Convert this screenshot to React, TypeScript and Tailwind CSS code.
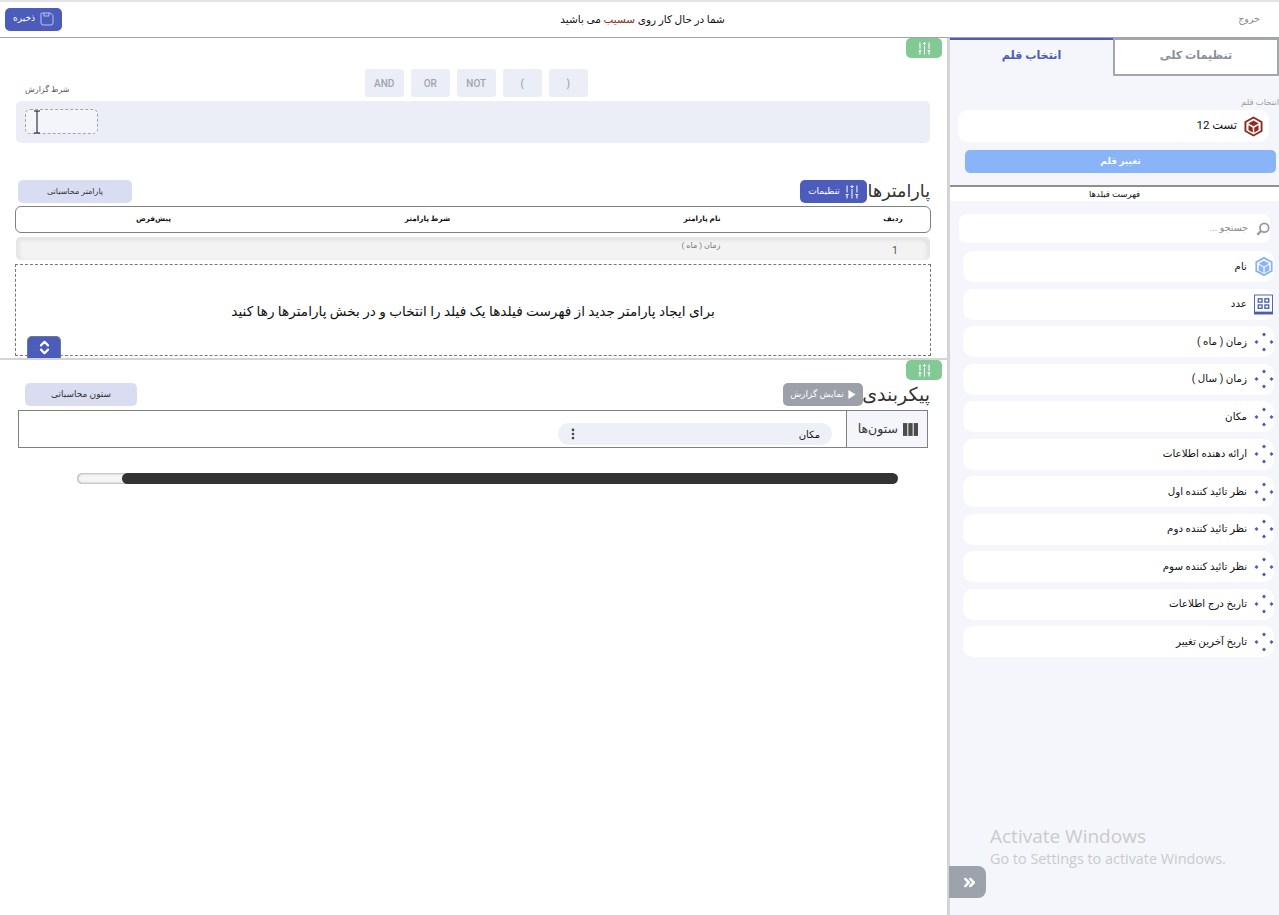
import { ChevronsRight, ChevronsUpDown, EllipsisVertical } from "lucide-react";
import { ReactNode } from "react";

const fields = [
  { name: "نام", icon: "cube" },
  { name: "عدد", icon: "grid" },
  { name: "زمان ( ماه )", icon: "dots" },
  { name: "زمان ( سال )", icon: "dots" },
  { name: "مکان", icon: "dots" },
  { name: "ارائه دهنده اطلاعات", icon: "dots" },
  { name: "نظر تائید کننده اول", icon: "dots" },
  { name: "نظر تائید کننده دوم", icon: "dots" },
  { name: "نظر تائید کننده سوم", icon: "dots" },
  { name: "تاریخ درج اطلاعات", icon: "dots" },
  { name: "تاریخ آخرین تغییر", icon: "dots" },
];

const operators = ["AND", "OR", "NOT", "(", ")"];

function SlidersIcon({ className }: { className: string }) {
  return (
    <svg viewBox="0 0 14 14" className={className} fill="currentColor">
      <rect x="1.5" y="0.5" width="1.2" height="7" />
      <rect x="6.4" y="4" width="1.2" height="9.5" />
      <rect x="11.3" y="0.5" width="1.2" height="7" />
      <path d="M0.2 9h3.8l-1.9 2.6z M5 1h4L7 3.4z M9.9 9h3.8l-1.9 2.6z" />
      <rect x="1.5" y="11" width="1.2" height="2.5" />
      <rect x="11.3" y="11" width="1.2" height="2.5" />
      <rect x="6.4" y="0.2" width="1.2" height="1" />
    </svg>
  );
}

function FieldIcon({ type }: { type: string }) {
  if (type === "cube") {
    return (
      <svg viewBox="0 0 22 22" className="w-[20px] h-[21px]" fill="none" stroke="#8ab4f8">
        <path d="M11 1.5 19.5 6.2V15.8L11 20.5 2.5 15.8V6.2Z" strokeWidth="2" />
        <path d="M11 5 16 7.8 11 10.6 6 7.8Z" fill="#8ab4f8" strokeWidth="1" />
        <path d="M5.5 9.5 10 12V17.5L5.5 15Z M16.5 9.5 12 12V17.5L16.5 15Z" fill="#8ab4f8" strokeWidth="0.6" />
      </svg>
    );
  }
  if (type === "grid") {
    return (
      <svg viewBox="0 0 20 21" className="w-[19px] h-[21px]" fill="none" stroke="#4c5cba">
        <rect x="0.5" y="0.5" width="19" height="19.5" strokeWidth="1" />
        <rect x="0" y="18" width="20" height="3" fill="#4c5cba" stroke="none" />
        <rect x="4.5" y="4.5" width="4" height="3.5" strokeWidth="1.4" />
        <rect x="11.5" y="4.5" width="4" height="3.5" strokeWidth="1.4" />
        <rect x="4.5" y="11" width="4" height="3.5" strokeWidth="1.4" />
        <rect x="11.5" y="11" width="4" height="3.5" strokeWidth="1.4" />
      </svg>
    );
  }
  return (
    <svg viewBox="0 0 20 20" className="w-[20px] h-[20px]" fill="#4c5cba">
      <path d="M10 .5 12 2.5 10 4.5 8 2.5Z M10 15.5 12 17.5 10 19.5 8 17.5Z M2.5 8 4.5 10 2.5 12 .5 10Z M17.5 8 19.5 10 17.5 12 15.5 10Z" />
    </svg>
  );
}

function SmallButton({ children, className }: { children: ReactNode; className: string }) {
  return (
    <div className={`h-[23px] rounded-[5px] flex items-center justify-center ${className}`}>
      {children}
    </div>
  );
}

function GreenTab() {
  return (
    <div className="absolute right-[5px] top-0 w-[36px] h-[20px] bg-[#82c995] rounded-[5px] flex items-center justify-center text-white">
      <SlidersIcon className="w-[13px] h-[13px]" />
    </div>
  );
}

export default function App() {
  return (
    <div dir="rtl" className="relative w-[1279px] h-[915px] overflow-hidden bg-white text-[#111] font-[Roboto,'DejaVu_Sans',sans-serif]">
      <div className="h-[2px] bg-[#e3e3e3]" />

      <header className="h-[36px] flex items-center justify-between border-b border-b-[#a3a3a8] pr-[19px] pl-[5px]">
        <span className="text-[9.5px] text-[#8a8a8a]">خروج</span>
        <span className="text-[10.5px] mr-[15px]">
          شما در حال کار روی <span className="text-[#8c2b20]">سسیب</span> می باشید
        </span>
        <div className="w-[57px] h-[23px] mt-[-1px] bg-[#4c5cba] rounded-[5px] flex items-center justify-center gap-[5px] text-white text-[9px]">
          <svg viewBox="0 0 14 14" className="w-[14px] h-[14px]" fill="none" stroke="#b9c6f2" strokeWidth="1">
            <path d="M1.5 1h9L13 3.5V11a2 2 0 0 1-2 2H3a2 2 0 0 1-2-2V1.5Z" />
            <path d="M4 1v3h5V1" />
          </svg>
          ذخیره
        </div>
      </header>

      <div className="flex h-[877px]">
        {/* sidebar */}
        <aside className="w-[329px] shrink-0 bg-[#f5f6fb]">
          <div className="flex h-[38px]">
            <div className="w-[166px] bg-white border-2 border-[#a3a6ad] pb-[2px] flex items-center justify-center text-[11.2px] font-bold text-[#8a8f9c]">
              تنظیمات کلی
            </div>
            <div className="w-[163px] border-t-2 border-t-[#4c5cba] pb-[3px] flex items-center justify-center text-[11.2px] font-bold text-[#4c5cba]">
              انتخاب قلم
            </div>
          </div>

          <div className="text-[8.5px] text-[#9a9ca6] mt-[20px] h-[12px] leading-[12px] whitespace-nowrap">انتخاب قلم</div>
          <div className="mr-[10px] ml-[8px] mt-[2px] h-[32px] bg-white rounded-[10px] flex items-center gap-[7px] px-[6px] text-[11.5px]">
            <svg viewBox="0 0 20 22" className="w-[19px] h-[21px]" fill="none" stroke="#8c2b20">
              <path d="M10 1.5 18.5 6.2V15.8L10 20.5 1.5 15.8V6.2Z" strokeWidth="2" />
              <path d="M10 5 15 7.8 10 10.6 5 7.8Z" fill="#8c2b20" strokeWidth="0.5" />
              <path d="M5 10 9 12.3V17L5 14.7Z M15 10 11 12.3V17L15 14.7Z" fill="#8c2b20" strokeWidth="0.5" />
            </svg>
            <span>تست 12</span>
          </div>
          <div className="mr-[3px] ml-[15px] mt-[8px] h-[23px] bg-[#8ab4f8] rounded-[5px] flex items-center justify-center text-white text-[9px] font-bold">
            تغییر قلم
          </div>

          <div className="mt-[12px] h-[2px] bg-[#8f8f8f]" />
          <div className="h-[14px] bg-white flex items-center justify-center text-[8.5px]">فهرست فیلدها</div>

          <div className="mr-[9px] ml-[9px] mt-[13px] h-[29px] bg-white rounded-[8px] flex items-center gap-[8px] text-[9.5px] text-[#8a8a8a]">
            <svg viewBox="0 0 16 16" className="w-[14px] h-[14px]" fill="none" stroke="#9a9a9a" strokeWidth="2">
              <circle cx="9.5" cy="6.5" r="5" />
              <path d="M5.8 10.2 1.5 14.5" strokeWidth="2.6" />
            </svg>
            <span>جستجو ...</span>
          </div>

          <div className="mt-[8px] mr-[5px] ml-[13px] flex flex-col gap-[6.5px]">
            {fields.map((field) => (
              <div key={field.name} className="h-[31px] bg-white rounded-[10px] flex items-center gap-[6px] text-[10.3px]">
                <div className="w-[21px] flex justify-center"><FieldIcon type={field.icon} /></div>
                <span>{field.name}</span>
              </div>
            ))}
          </div>
        </aside>

        <div className="w-[3px] shrink-0 bg-[#d4d4d4]" />

        {/* main */}
        <main className="flex-1 min-w-0">
          <section className="relative h-[320px]">
            <GreenTab />
            <div dir="ltr" className="pt-[31px] pl-[365px] flex gap-[7.5px]">
              {operators.map((op) => (
                <div key={op} className="w-[38.5px] h-[28px] bg-[#ebeef7] rounded-[3px] flex items-center justify-center text-[10px] font-medium text-[#a0a4ae]">
                  {op}
                </div>
              ))}
            </div>

            <div className="text-[8px] text-[#555] h-[0px] leading-[0] pl-[25px] mt-[-7px]" dir="ltr">
              <span dir="rtl">شرط گزارش</span>
            </div>

            <div dir="ltr" className="mt-[11px] ml-[16px] mr-[17px] h-[42px] bg-[#ebeef7] rounded-[5px] pl-[9px] pt-[8px]">
              <div className="relative w-[73px] h-[25px] bg-[#f3f5fb] border border-dashed border-[#a3a3a8] rounded-[5px]">
                <svg viewBox="0 0 8 24" className="absolute left-[7px] top-0 w-[8px] h-[24px]" fill="none" stroke="#111" strokeWidth="1">
                  <path d="M1 1h6M4 1v22M1 23h6" />
                </svg>
              </div>
            </div>

            <div className="mt-[37px] mr-[17px] ml-[18px] flex items-center h-[23px]">
              <span className="w-[63px] text-[17.5px] leading-[23px] text-[#333] whitespace-nowrap">پارامترها</span>
              <SmallButton className="w-[67px] bg-[#4c5cba] text-white text-[9px] gap-[5px] font-medium">
                <SlidersIcon className="w-[14px] h-[14px] text-[#dfe4f8]" />
                تنظیمات
              </SmallButton>
              <SmallButton className="w-[114px] mr-auto bg-[#d9ddf1] text-[#333] text-[8px]">پارامتر محاسباتی</SmallButton>
            </div>

            <div className="mt-[3px] mr-[16px] ml-[15px] h-[27px] border border-[#808080] rounded-[6px] flex items-center text-[7.3px] font-bold">
              <div className="w-[74px] text-center">ردیف</div>
              <div className="w-[308px] text-center">نام پارامتر</div>
              <div className="w-[241px] text-center">شرط پارامتر</div>
              <div className="w-[291px] pr-[16px] text-center">پیش‌فرض</div>
            </div>

            <div className="mt-[4px] mr-[17px] ml-[16px] h-[23px] bg-[#f3f3f3] rounded-[5px] shadow-[inset_-4px_4px_3px_#e6e6e6,inset_4px_0_3px_#e6e6e6] flex text-[#777]">
              <div className="w-[70px] text-center text-[10.5px] pt-[6px] text-[#555]">1</div>
              <div className="w-[318px] text-center text-[8px] pt-[3px]">زمان ( ماه )</div>
            </div>

            <div className="relative mt-[4px] mr-[16px] ml-[15px] h-[92px] pt-[3px] border border-dashed border-[#777] flex items-center justify-center text-[13.65px]">
              برای ایجاد پارامتر جدید از فهرست فیلدها یک فیلد را انتخاب و در بخش پارامترها رها کنید
              <div className="absolute left-[11px] top-[71px] w-[34px] h-[22px] bg-[#4c5cba] border border-[#6f7686] border-b-0 rounded-t-[5px] flex items-center justify-center text-white">
                <ChevronsUpDown size={17} strokeWidth={3} />
              </div>
            </div>
          </section>

          <div className="h-[2px] bg-[#d4d4d4]" />

          <section className="relative">
            <GreenTab />
            <div className="pt-[23px] mr-[17px] ml-[25px] flex items-center h-[46px]">
              <span className="w-[67px] text-[19px] leading-[23px] text-[#333] whitespace-nowrap">پیکربندی</span>
              <SmallButton className="w-[80px] bg-[#9ca0a8] text-white text-[9px] gap-[4px]">
                <svg viewBox="0 0 8 10" className="w-[8px] h-[9px]" fill="currentColor"><path d="M0 0 8 5 0 10Z" /></svg>
                نمایش گزارش
              </SmallButton>
              <SmallButton className="w-[112px] mr-auto bg-[#d9ddf1] text-[#333] text-[9px]">ستون محاسباتی</SmallButton>
            </div>

            <div className="mt-[4px] mr-[19px] ml-[18px] h-[38px] border border-[#808080] flex">
              <div className="w-[81px] bg-[#f5f6fb] border-l border-l-[#808080] pr-[9px] flex items-center gap-[5px] text-[12.5px] text-[#333]">
                <svg viewBox="0 0 14 12" className="w-[15px] h-[13px]" fill="#4b4b4b">
                  <rect x="0" y="0" width="4" height="12" /><rect x="5" y="0" width="4" height="12" /><rect x="10" y="0" width="4" height="12" />
                </svg>
                <span>ستون‌ها</span>
              </div>
              <div className="mr-[14px] mt-[12px] w-[274px] h-[22px] bg-[#eef0f8] rounded-full flex items-center justify-between pr-[12px] pl-[8px] text-[10px]">
                <span>مکان</span>
                <EllipsisVertical size={14} strokeWidth={2.5} className="text-[#444]" />
              </div>
            </div>

            <div dir="ltr" className="mt-[25px] mr-[49px] w-[821px] h-[11px] flex">
              <div className="w-[50px] -mr-[5px] rounded-l-full bg-[#f5f5f5] shadow-[inset_0_0_3px_#777]" />
              <div className="flex-1 bg-[#333] rounded-full" />
            </div>
          </section>
        </main>
      </div>

      <div dir="ltr" className="absolute left-[990px] top-[824px] text-[#c9cacd] font-['Open_Sans',sans-serif] whitespace-nowrap">
        <div className="text-[19px] leading-[24px]">Activate Windows</div>
        <div className="text-[14.4px] leading-[21px]">Go to Settings to activate Windows.</div>
      </div>

      <div className="absolute left-[949px] top-[866px] w-[37px] h-[32px] pl-[3px] bg-[#9ca3ad] rounded-r-[8px] flex items-center justify-center text-white">
        <ChevronsRight size={17} strokeWidth={3.5} />
      </div>
    </div>
  );
}
